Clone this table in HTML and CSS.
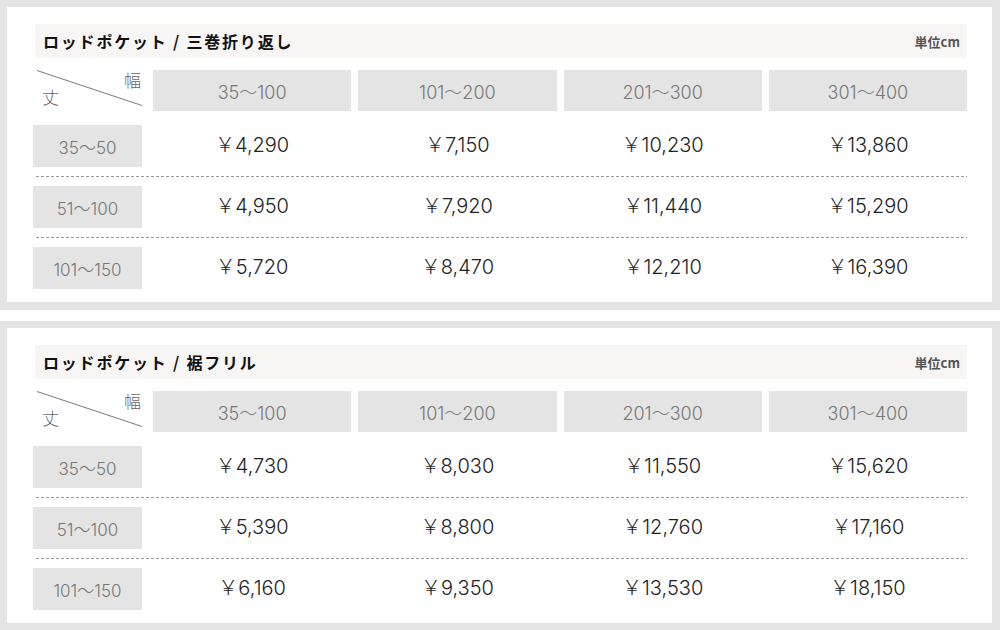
FILE: index.html
```html
<!DOCTYPE html>
<html lang="ja">
<head>
<meta charset="utf-8">
<link rel="stylesheet" href="styles.css">
</head>
<body>
<section class="panel">
  <div class="title"><h2>ロッドポケット / 三巻折り返し</h2><span class="unit">単位cm</span></div>
  <div class="row head">
    <div class="corner">
      <svg class="diag" width="109" height="41" viewBox="0 0 109 41"><line x1="4" y1="0.5" x2="109" y2="35.5" stroke="#7a7a7a" stroke-width="1"/></svg>
      <span class="cw">幅</span><span class="ch">丈</span>
    </div>
    <div class="hcell">35〜100</div>
    <div class="hcell">101〜200</div>
    <div class="hcell">201〜300</div>
    <div class="hcell">301〜400</div>
  </div>
  <div class="row first">
    <div class="label">35〜50</div>
    <div class="price">￥4,290</div><div class="price">￥7,150</div><div class="price">￥10,230</div><div class="price">￥13,860</div>
  </div>
  <div class="sep"></div>
  <div class="row">
    <div class="label">51〜100</div>
    <div class="price">￥4,950</div><div class="price">￥7,920</div><div class="price">￥11,440</div><div class="price">￥15,290</div>
  </div>
  <div class="sep"></div>
  <div class="row">
    <div class="label">101〜150</div>
    <div class="price">￥5,720</div><div class="price">￥8,470</div><div class="price">￥12,210</div><div class="price">￥16,390</div>
  </div>
</section>
<section class="panel">
  <div class="title"><h2>ロッドポケット / 裾フリル</h2><span class="unit">単位cm</span></div>
  <div class="row head">
    <div class="corner">
      <svg class="diag" width="109" height="41" viewBox="0 0 109 41"><line x1="4" y1="0.5" x2="109" y2="35.5" stroke="#7a7a7a" stroke-width="1"/></svg>
      <span class="cw">幅</span><span class="ch">丈</span>
    </div>
    <div class="hcell">35〜100</div>
    <div class="hcell">101〜200</div>
    <div class="hcell">201〜300</div>
    <div class="hcell">301〜400</div>
  </div>
  <div class="row first">
    <div class="label">35〜50</div>
    <div class="price">￥4,730</div><div class="price">￥8,030</div><div class="price">￥11,550</div><div class="price">￥15,620</div>
  </div>
  <div class="sep"></div>
  <div class="row">
    <div class="label">51〜100</div>
    <div class="price">￥5,390</div><div class="price">￥8,800</div><div class="price">￥12,760</div><div class="price">￥17,160</div>
  </div>
  <div class="sep"></div>
  <div class="row">
    <div class="label">101〜150</div>
    <div class="price">￥6,160</div><div class="price">￥9,350</div><div class="price">￥13,530</div><div class="price">￥18,150</div>
  </div>
</section>
</body>
</html>
```
FILE: styles.css
```css
html, body {
  margin: 0;
  padding: 0;
  background: #ffffff;
}
body {
  font-family: "Noto Sans CJK JP", "Noto Sans", sans-serif;
  width: 1000px;
}
.panel {
  box-sizing: border-box;
  width: 1000px;
  height: 310px;
  border-style: solid;
  border-color: #e4e4e4;
  border-width: 7px 8px 8px 7px;
  background: #fff;
  padding: 17px 25px 13px 26px;
  margin-bottom: 11px;
}
.title {
  margin-left: 2px;
  height: 34px;
  background: #f7f6f4;
  display: flex;
  align-items: center;
  justify-content: space-between;
  padding: 0 7px 0 8px;
}
.title h2 {
  margin: 0;
  font-size: 16px;
  font-weight: 700;
  letter-spacing: 1.8px;
  color: #111;
}
.unit {
  font-size: 13px;
  font-weight: 700;
  color: #555;
}
.row {
  display: grid;
  grid-template-columns: 113px repeat(4, 1fr);
  column-gap: 7px;
  height: 42px;
}
.row.head {
  margin-top: 12px;
  height: 41px;
}
.row.first {
  margin-top: 14px;
}
.corner {
  position: relative;
  width: 109px;
  height: 41px;
  color: #666;
  font-size: 17px;
  font-weight: 300;
}
.diag {
  position: absolute;
  left: 0;
  top: 0;
}
.cw {
  position: absolute;
  right: 1px;
  top: 0;
  line-height: 20px;
}
.ch {
  position: absolute;
  left: 9px;
  top: 17px;
  line-height: 20px;
}
.hcell, .label, .price {
  font-family: "Inter", "Noto Sans CJK JP", sans-serif;
  font-weight: 300;
  display: flex;
  align-items: center;
  justify-content: center;
}
.hcell {
  background: #e4e4e4;
  color: #777;
  font-size: 18px;
}
.label {
  width: 109px;
  background: #e4e4e4;
  color: #777;
  font-size: 17px;
}
.price {
  color: #222;
  font-size: 20px;
  padding-bottom: 6px;
}
.sep {
  height: 1px;
  margin: 9px 0 9px 3px;
  background: repeating-linear-gradient(to right, #9a9a9a 0 3px, transparent 3px 5px);
}
```
